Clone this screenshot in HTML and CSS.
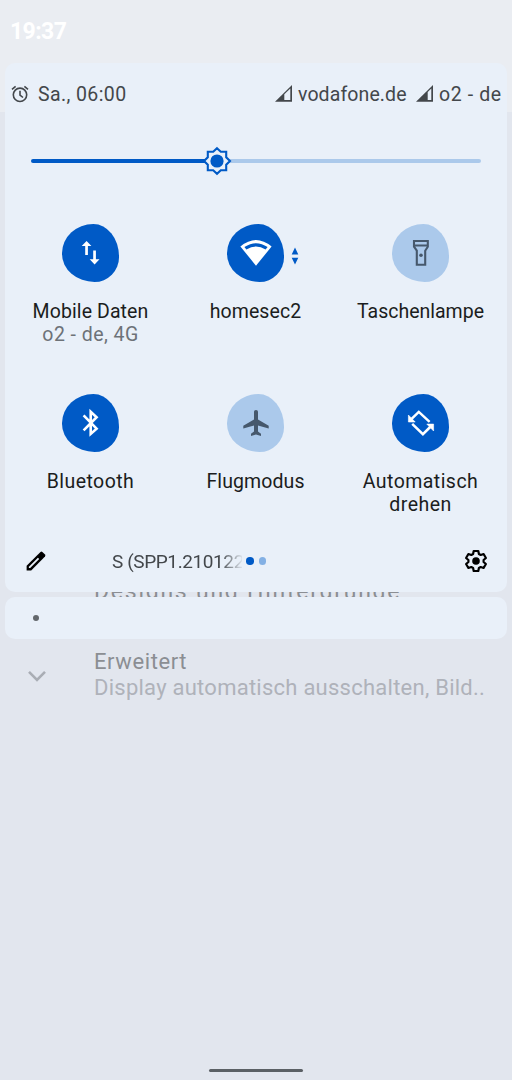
FILE: index.html
```html
<!DOCTYPE html>
<html lang="de">
<head>
    <meta charset="UTF-8">
    <meta name="viewport" content="width=device-width, initial-scale=1.0">
    <title>Schnelleinstellungen</title>
    <link rel="stylesheet" href="styles.css">
</head>
<body>
    <div class="settings">
        <header class="statusbar">
            <span class="clock">19:37</span>
        </header>
        <div class="setting-row covered">
            <div class="setting-title wide">Designs und Hintergründe</div>
        </div>
        <div class="setting-row">
            <svg class="chevron" width="20" height="12" viewBox="0 0 20 12"><path d="M2 1.8l8 8 8-8" fill="none" stroke="#a9adb4" stroke-width="2.6"/></svg>
            <div class="setting-title">Erweitert</div>
            <div class="setting-sub">Display automatisch ausschalten, Bild..</div>
        </div>
        <div class="homebar"></div>
    </div>

    <div class="shade">
        <section class="panel">
            <div class="panel-head">
                <svg class="alarm" width="18" height="18" viewBox="0 0 18 18" fill="none" stroke="#43474b" stroke-width="1.6"><circle cx="9" cy="9.8" r="6.7"/><path d="M1 4.4l3.6-3M17 4.4l-3.6-3M9 5.8v4.3l3 2.4"/></svg>
                <span class="next-alarm">Sa., 06:00</span>
                <span class="carriers">
                    <svg width="18" height="17" viewBox="0 0 18 17"><path d="M0 16.7L17 0v16.7z" fill="#43474b"/><path d="M9.3 9.3l6-5.7v11.5h-6z" fill="#e9f0f9"/></svg>
                    <span class="vodafone">vodafone.de</span>
                    <svg width="18" height="17" viewBox="0 0 18 17"><path d="M0 16.7L17 0v16.7z" fill="#43474b"/><path d="M11.7 7l3.6-3.4v11.5h-3.6z" fill="#e9f0f9"/></svg>
                    <span class="o2">o2 - de</span>
                </span>
            </div>

            <div class="brightness">
                <div class="track"></div>
                <svg class="thumb" width="30" height="30" viewBox="0 0 30 30"><path d="M15 2.3l3.8 3.5h5.4v5.4L28 15l-3.8 3.8v5.4h-5.4L15 27.7l-3.8-3.5H5.8v-5.4L2 15l3.8-3.8V5.8h5.4z" fill="#e9f0f9" stroke="#005ac6" stroke-width="2.1"/><circle cx="15" cy="15" r="6.6" fill="#005ac6"/></svg>
            </div>

            <div class="tiles">
                <div class="tile">
                    <div class="blob on"><svg width="28" height="28" viewBox="0 0 28 28" fill="#fff"><path d="M9.6 2l4.8 5.1h-3.5V16H8.2V7.1H4.7zM17.6 25.4l-4.9-5.1h3.5v-8.9h2.7v8.9h3.6z"/></svg></div>
                    <div class="label">Mobile Daten</div>
                    <div class="sublabel">o2 - de, 4G</div>
                </div>
                <div class="tile">
                    <div class="blob on"><svg width="34" height="30" viewBox="0 0 34 30"><path d="M1.4 8.4Q17-4.6 32.6 8.4L17 27.8z" fill="#fff"/><path d="M5.4 9.1Q17 1.3 28.6 9.1L26.6 11.6Q17 5.2 7.4 11.6z" fill="#005ac6"/></svg></div>
                    <svg class="traffic" width="8" height="18" viewBox="0 0 8 18"><path d="M4 .5l3.3 7H.7zM4 17.5l3.3-6.8H.7z" fill="#005ac6"/></svg>
                    <div class="label">homesec2</div>
                </div>
                <div class="tile">
                    <div class="blob"><svg width="18" height="28" viewBox="0 0 18 28" fill="none" stroke="#46586c" stroke-width="2.1"><path d="M2 2h13.8v5.7l-2.6 4v14.1H4.8V11.7L2 7.7zM2 6.5h13.8"/><circle cx="9" cy="16.3" r="1.8" fill="#46586c" stroke="none"/></svg></div>
                    <div class="label torch">Taschenlampe</div>
                </div>
                <div class="tile">
                    <div class="blob on"><svg width="20" height="30" viewBox="0 0 20 30" fill="none" stroke="#fff" stroke-width="2.6"><path d="M2.6 7.3l13 13.3-5.9 5.3V3.7l5.9 5.5L2.6 22.3"/></svg></div>
                    <div class="label bluetooth">Bluetooth</div>
                </div>
                <div class="tile">
                    <div class="blob"><svg width="28" height="28" viewBox="0 0 28 28" fill="#46586c"><path d="M14 1c1.3 0 2 .9 2 2.2v7.2l10.7 6.3v2.7L16 16.4v6.2l3 2.2v2.1l-5-1.3-5 1.3v-2.1l3-2.2v-6.2L1.3 19.4v-2.7L12 10.4V3.2C12 1.9 12.7 1 14 1z"/></svg></div>
                    <div class="label">Flugmodus</div>
                </div>
                <div class="tile">
                    <div class="blob on"><svg width="28" height="28" viewBox="0 0 28 28"><path d="M22.6 12.8L11.8 2.9 4.6 9.9M5.2 14.8l10.7 10.4 7.3-7.2" fill="none" stroke="#fff" stroke-width="2.5"/><path d="M1.4 6v7h6.8zM26.6 22v-6.9h-6.8z" fill="#fff" stroke="#fff" stroke-width=".6"/></svg></div>
                    <div class="label rotate">Automatisch<br>drehen</div>
                </div>
            </div>

            <footer class="panel-foot">
                <svg class="pencil" width="20" height="20" viewBox="0 0 20 20"><path d="M.6 19.4v-4.6L14.5 1q1-.8 1.9 0L19 3.6q.8 1 0 1.9L5.2 19.4z"/><path d="M2.9 17.1v-1.3l9-9 1.3 1.3-9 9z" fill="#e9f0f9"/></svg>
                <span class="build">S (SPP1.210122</span>
                <span class="dots"><i class="dot"></i><i class="dot pale"></i></span>
                <svg class="gear" width="24" height="24" viewBox="0 0 24 24"><path d="M9.7 2h4.6l.6 3 1.8 1 2.9-1 2.3 4-2.3 2v2l2.3 2-2.3 4-2.9-1-1.8 1-.6 3H9.7l-.6-3-1.8-1-2.9 1-2.3-4 2.3-2v-2L2.1 9l2.3-4 2.9 1 1.8-1z" fill="none" stroke="#000" stroke-width="2.2" stroke-linejoin="round"/><circle cx="12" cy="12" r="3.8"/></svg>
            </footer>
        </section>
        <section class="notification"><i></i></section>
    </div>
</body>
</html>
```
FILE: styles.css
```css
* {
    box-sizing: border-box;
}
body {
    margin: 0;
    height: 1080px;
    position: relative;
    overflow: hidden;
    background-color: #e2e6ee;
    color: #1b1d20;
    font-family: Roboto, "Liberation Sans", sans-serif;
    font-size: 19.5px;
}
svg {
    display: block;
    flex-shrink: 0;
}

/* page behind the shade */
.settings {
    height: 1080px;
    display: flex;
    flex-direction: column;
}
.statusbar {
    height: 112px;
    padding: 18px 10px;
    background-color: #eaedf2;
}
.clock {
    color: #fff;
    font-size: 23px;
    font-weight: bold;
    line-height: 27px;
    letter-spacing: -0.6px;
}
.setting-row {
    position: relative;
    padding-left: 94px;
    white-space: nowrap;
}
.setting-row.covered {
    margin-top: 467px;
    height: 70px;
}
.setting-title {
    color: #8b8e93;
    font-size: 22px;
    line-height: 26px;
    letter-spacing: 0.6px;
}
.setting-title.wide {
    font-size: 23px;
    letter-spacing: 1.75px;
}
.setting-sub {
    color: #afb2ba;
    font-size: 22px;
    line-height: 26px;
    letter-spacing: 0.25px;
}
.chevron {
    position: absolute;
    left: 26.5px;
    top: 20.5px;
}
.homebar {
    width: 94px;
    height: 3px;
    margin: auto auto 8px 209px;
    border-radius: 2px;
    background-color: #5b6065;
}

/* quick settings shade */
.shade {
    position: absolute;
    top: 63px;
    left: 5px;
    width: 502px;
}
.panel {
    height: 529px;
    border-radius: 10px;
    background-color: #e9f0f9;
}
.panel-head {
    display: flex;
    align-items: center;
    height: 61px;
    padding: 0 5px 0 6px;
    color: #43474b;
    white-space: nowrap;
}
.next-alarm {
    margin-left: 9px;
    padding-top: 1px;
    letter-spacing: 0.4px;
}
.carriers {
    display: flex;
    align-items: center;
    margin-left: auto;
}
.vodafone {
    width: 118px;
    margin-left: 5px;
    padding-top: 1px;
    letter-spacing: 0.1px;
}
.o2 {
    width: 63px;
    margin-left: 5px;
    padding-top: 1px;
    letter-spacing: 0.6px;
}
.brightness {
    position: relative;
    height: 74px;
    padding: 35px 26px;
}
.track {
    height: 4px;
    border-radius: 2px;
    background: linear-gradient(to right, #005ac6 186px, #abc9eb 186px);
}
.thumb {
    position: absolute;
    left: 197px;
    top: 22px;
}
.tiles {
    display: grid;
    grid-template-columns: repeat(3, 165px);
    grid-template-rows: 170px 142px;
    margin-left: 3px;
    padding-top: 26px;
}
.tile {
    position: relative;
    display: flex;
    flex-direction: column;
    align-items: center;
    text-align: center;
}
.blob {
    display: flex;
    align-items: center;
    justify-content: center;
    width: 57.5px;
    height: 57.5px;
    margin-bottom: 19.5px;
    border-radius: 55% 45% 43% 57% / 51% 57% 43% 49%;
    background-color: #abc9eb;
}
.blob.on {
    background-color: #005ac6;
}
.traffic {
    position: absolute;
    left: 117.5px;
    top: 23px;
}
.label, .sublabel {
    line-height: 22.5px;
    white-space: nowrap;
    letter-spacing: 0.1px;
}
.torch {
    letter-spacing: 0;
}
.bluetooth, .rotate {
    letter-spacing: 0.45px;
}
.sublabel {
    color: #6d7278;
    letter-spacing: 0.45px;
}
.panel-foot {
    display: flex;
    align-items: center;
    height: 62px;
    margin-top: -6px;
    padding: 0 19.5px 0 21px;
}
.build {
    width: 130px;
    margin-left: 66px;
    color: #43474b;
    font-size: 19px;
    white-space: nowrap;
    letter-spacing: -0.4px;
    -webkit-mask-image: linear-gradient(to right, #000 108px, transparent 132px);
    mask-image: linear-gradient(to right, #000 108px, transparent 132px);
}
.dots {
    display: flex;
    gap: 5px;
    margin-left: 4px;
}
.dot {
    width: 7.5px;
    height: 7.5px;
    border-radius: 50%;
    background-color: #005ac6;
}
.dot.pale {
    background-color: #83b0e4;
}
.gear {
    margin-left: auto;
}
.notification {
    display: flex;
    align-items: center;
    height: 42px;
    margin-top: 5px;
    padding-left: 28px;
    border-radius: 10px;
    background-color: #e9f0f9;
}
.notification i {
    width: 6px;
    height: 6px;
    border-radius: 50%;
    background-color: #63676c;
}
```
